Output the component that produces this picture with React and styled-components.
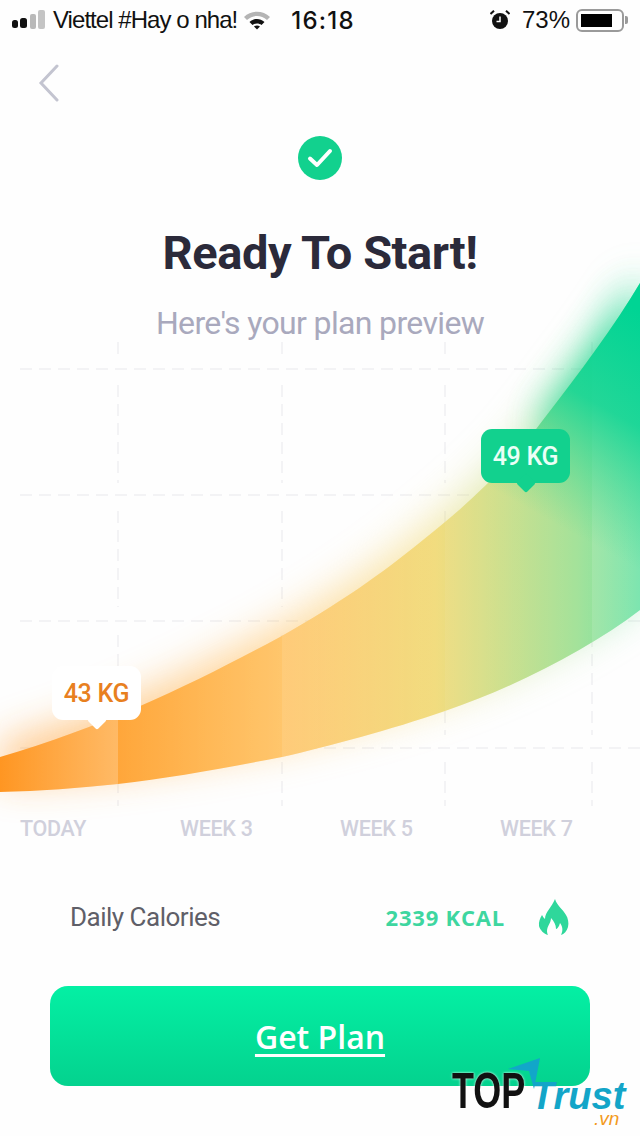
import styled, { createGlobalStyle } from "styled-components"

const GlobalStyle = createGlobalStyle`
  * { box-sizing: border-box; }
  body { margin: 0; background: #fefefe; }
`

const BAND = "M0 757 C110 725 200 680 280 637 C340 603 380 575 423 540 C470 503 510 465 543 420 C580 372 615 325 640 283 L640 610 C590 648 520 685 445 711 C390 730 330 746 282 757 C220 769 170 778 118 784 C80 788 40 791 0 792 Z"

const GRID_ROWS = [369, 495, 621, 748]
const GRID_COLS = [118, 282, 445, 592]
const GRID_SPANS = [[342, 358], [385, 483], [511, 607], [635, 735], [762, 806]]
const COL_SHADES = [
  { x: 0, w: 118, from: 0, to: 0.22 },
  { x: 118, w: 164, from: 0, to: 0.12 },
  { x: 282, w: 163, from: 0.2, to: 0.1 },
  { x: 445, w: 147, from: 0.14, to: 0.12 },
  { x: 592, w: 48, from: 0.22, to: 0.2 },
]
const WEEKS = ["TODAY", "WEEK 3", "WEEK 5", "WEEK 7"]

function SignalIcon() {
  return (
    <svg width="35" height="22" viewBox="0 0 35 22">
      <rect x="0" y="11" width="6" height="8" rx="2.5" fill="#111" />
      <rect x="8" y="9" width="7" height="10" rx="2.5" fill="#111" />
      <rect x="18" y="5" width="6" height="15" rx="2" fill="#b9b9b9" />
      <rect x="26" y="1" width="7" height="19" rx="2" fill="#c4c4c4" />
    </svg>
  )
}

function WifiIcon() {
  return (
    <svg width="28" height="20" viewBox="0 0 28 20">
      <path d="M1 7 C8 0 20 0 27 7 L24 10 C18 4.500 10 4.500 4 10 Z" fill="#b4b4b4" />
      <path d="M6.500 12 C11 8 17 8 21.500 12 L18.500 15 C16 13 12 13 9.500 15 Z" fill="#111" />
      <path d="M11 16.500 C13 15 15 15 17 16.500 L14 19.500 Z" fill="#111" />
    </svg>
  )
}

function AlarmIcon() {
  return (
    <svg width="20" height="20" viewBox="0 0 20 20">
      <circle cx="10" cy="11" r="8" fill="#111" />
      <path d="M10 6.500 V11.500 H6.500" stroke="#fff" strokeWidth="1.500" fill="none" />
      <path d="M0.500 4 L4 0.800 M19.500 4 L16 0.800" stroke="#111" strokeWidth="2" />
    </svg>
  )
}

function FlameIcon() {
  return (
    <svg width="32" height="38" viewBox="0 0 32 38">
      <path
        d="M17 1 C19 8 25 11 28 17 C30 20 31 25 30 29 C29 33 26 36 23 37 C25 33 25 29 22 25 C21 29 19 31 18 31 C18 27 16 23 13 20 C13 25 9 28 9 33 C9 34.500 9.500 36 10 37 C6 36 2 32 1 28 C0.500 24 2 20 4 17 C5 19 6 20 7 21 C7 14 14 9 17 1 Z"
        fill="#2fd79b"
      />
    </svg>
  )
}

function Chart() {
  return (
    <ChartSvg viewBox="0 230 640 590">
      <defs>
        <linearGradient id="band" gradientUnits="userSpaceOnUse" x1="0" y1="0" x2="640" y2="0">
          <stop offset="0" stopColor="#ff9622" />
          <stop offset="0.18" stopColor="#ffa63a" />
          <stop offset="0.44" stopColor="#ffbe58" />
          <stop offset="0.68" stopColor="#f0d870" />
          <stop offset="0.9" stopColor="#98de8c" />
          <stop offset="1" stopColor="#5cdf9c" />
        </linearGradient>
        <linearGradient id="greenTop" gradientUnits="userSpaceOnUse" x1="640" y1="310" x2="530" y2="510">
          <stop offset="0" stopColor="#00d494" />
          <stop offset="0.45" stopColor="#0dd494" stopOpacity="0.85" />
          <stop offset="1" stopColor="#3fd690" stopOpacity="0" />
        </linearGradient>
        {COL_SHADES.map((c, i) => (
          <linearGradient key={c.x} id={`shade${i}`}>
            <stop offset="0" stopColor="#fff" stopOpacity={c.from} />
            <stop offset="1" stopColor="#fff" stopOpacity={c.to} />
          </linearGradient>
        ))}
        <filter id="glow" filterUnits="userSpaceOnUse" x="-100" y="100" width="840" height="900">
          <feGaussianBlur stdDeviation="20" />
        </filter>
        <clipPath id="bandClip">
          <path d={BAND} />
        </clipPath>
      </defs>

      {GRID_ROWS.map((y) => (
        <GridLine key={y} x1="20" y1={y} x2="640" y2={y} />
      ))}
      {GRID_COLS.map((x) =>
        GRID_SPANS.map(([a, b]) => <GridLine key={`${x}-${a}`} x1={x} y1={a} x2={x} y2={b} />)
      )}

      <path d={BAND} fill="url(#band)" filter="url(#glow)" opacity="0.55" transform="translate(0 -12)" />
      <path d="M640 283 C615 325 580 372 543 420 L640 560 Z" fill="#00d494" filter="url(#glow)" opacity="0.8" />

      <path d={BAND} fill="url(#band)" />
      <g clipPath="url(#bandClip)">
        {COL_SHADES.map((c, i) => (
          <rect key={c.x} x={c.x} y="270" width={c.w} height="530" fill={`url(#shade${i})`} />
        ))}
        <rect x="440" y="270" width="200" height="350" fill="url(#greenTop)" />
      </g>
    </ChartSvg>
  )
}

export default function App() {
  return (
    <>
      <GlobalStyle />
      <Page>
        <StatusBar>
          <StatusGroup>
            <SignalIcon />
            <Carrier>Viettel #Hay o nha!</Carrier>
            <WifiIcon />
          </StatusGroup>
          <Clock>16:18</Clock>
          <RightGroup>
            <AlarmIcon />
            <Percent>73%</Percent>
            <Battery>
              <BatteryFill />
            </Battery>
            <BatteryTip />
          </RightGroup>
        </StatusBar>

        <Nav>
          <svg width="22" height="38" viewBox="0 0 22 38">
            <path d="M19 2 L3 19 L19 36" fill="none" stroke="#c3c4d0" strokeWidth="3" strokeLinecap="round" />
          </svg>
        </Nav>

        <Header>
          <CheckBadge>
            <svg width="26" height="22" viewBox="0 0 26 22">
              <path d="M3 11.500 L10 18 L23 4" fill="none" stroke="#fff" strokeWidth="4" strokeLinecap="round" strokeLinejoin="round" />
            </svg>
          </CheckBadge>
          <Title>Ready To Start!</Title>
          <Subtitle>Here's your plan preview</Subtitle>
        </Header>

        <ChartSection>
          <Chart />
          <WeightTag $left={52} $top={436} $bg="#ffffff" $color="#e8801f">
            43 KG
          </WeightTag>
          <WeightTag $left={481} $top={199} $bg="#12d18e" $color="#eafff6">
            49 KG
          </WeightTag>
        </ChartSection>

        <AxisRow>
          {WEEKS.map((w) => (
            <AxisLabel key={w}>{w}</AxisLabel>
          ))}
        </AxisRow>

        <CaloriesRow>
          <CaloriesLabel>Daily Calories</CaloriesLabel>
          <CaloriesValue>
            <KcalText>2339 KCAL</KcalText>
            <FlameIcon />
          </CaloriesValue>
        </CaloriesRow>

        <GetPlanButton>Get Plan</GetPlanButton>

        <Watermark>
          <svg width="40" height="40" viewBox="0 0 40 40">
            <path d="M2 12 L34 1 L28 32 L23 14 Z" fill="#12a6c9" />
          </svg>
          <WatermarkTop>TOP</WatermarkTop>
          <WatermarkTrust>Trust</WatermarkTrust>
          <WatermarkVn>.vn</WatermarkVn>
        </Watermark>
      </Page>
    </>
  )
}

const Page = styled.div`
  position: relative;
  width: 640px;
  height: 1136px;
  overflow: hidden;
  background: #fefefe;
  display: flex;
  flex-direction: column;
`
const StatusBar = styled.div`
  height: 40px;
  padding: 0 12px;
  display: flex;
  align-items: center;
  font-family: "Liberation Sans", Arial, sans-serif;
  color: #111;
`
const StatusGroup = styled.div`
  display: flex;
  align-items: center;
  gap: 6px;
`
const RightGroup = styled(StatusGroup)`
  margin-left: auto;
`
const Carrier = styled.span`
  font-size: 24px;
  letter-spacing: -0.95px;
`
const Clock = styled.span`
  font-size: 24px;
  font-weight: 500;
  margin-left: 20px;
  letter-spacing: 1.2px;
  font-family: Inter, sans-serif;
`
const Percent = styled.span`
  font-size: 24px;
  margin-left: 6px;
`
const Battery = styled.div`
  width: 48px;
  height: 23px;
  padding: 3px;
  border: 2px solid #9a9a9a;
  border-radius: 6px;
`
const BatteryFill = styled.div`
  width: 31px;
  height: 100%;
  background: #000;
`
const BatteryTip = styled.div`
  width: 3px;
  height: 8px;
  margin-left: -5px;
  background: #9a9a9a;
  border-radius: 0 2px 2px 0;
`
const Nav = styled.div`
  height: 96px;
  padding: 24px 0 0 38px;
`
const Header = styled.div`
  position: relative;
  z-index: 1;
  display: flex;
  flex-direction: column;
  align-items: center;
`
const CheckBadge = styled.div`
  width: 44px;
  height: 44px;
  border-radius: 50%;
  background: #12d18e;
  display: flex;
  align-items: center;
  justify-content: center;
`
const Title = styled.h1`
  margin: 40px 0 0;
  font-family: Roboto, sans-serif;
  font-size: 47px;
  line-height: 66px;
  font-weight: 700;
  letter-spacing: -0.45px;
  color: #2b2a3a;
`
const Subtitle = styled.p`
  margin: 17px 0 0;
  font-family: Roboto, sans-serif;
  font-size: 32px;
  line-height: 40px;
  font-weight: 400;
  letter-spacing: -0.65px;
  color: #a9a9bd;
`
const ChartSection = styled.div`
  position: relative;
  height: 580px;
  margin-top: -113px;
`
const ChartSvg = styled.svg`
  display: block;
  width: 640px;
  height: 590px;
  overflow: visible;
`
const GridLine = styled.line`
  stroke: #f3f3f5;
  stroke-width: 2;
  stroke-dasharray: 12 7;
`
const WeightTag = styled.div`
  position: absolute;
  left: ${(p) => p.$left}px;
  top: ${(p) => p.$top}px;
  width: 89px;
  height: 54px;
  border-radius: 11px;
  background: ${(p) => p.$bg};
  color: ${(p) => p.$color};
  font-family: Roboto, sans-serif;
  font-size: 25px;
  font-weight: 500;
  letter-spacing: -0.3px;
  display: flex;
  align-items: center;
  justify-content: center;

  &::after {
    content: "";
    position: absolute;
    left: 50%;
    bottom: -7px;
    width: 14px;
    height: 14px;
    margin-left: -7px;
    background: ${(p) => p.$bg};
    transform: rotate(45deg);
    border-radius: 2px;
  }
`
const AxisRow = styled.div`
  height: 36px;
  padding: 5px 0 0 20px;
  display: grid;
  grid-template-columns: repeat(4, 160px);
`
const AxisLabel = styled.span`
  font-family: Roboto, sans-serif;
  font-size: 21.5px;
  line-height: 28px;
  font-weight: 500;
  letter-spacing: -0.3px;
  color: #d0d0dc;
`
const CaloriesRow = styled.div`
  margin-top: 52px;
  padding: 0 70px;
  height: 38px;
  display: flex;
  align-items: center;
  justify-content: space-between;
`
const CaloriesLabel = styled.span`
  font-family: Roboto, sans-serif;
  font-size: 26px;
  letter-spacing: -0.5px;
  color: #5f5f68;
`
const CaloriesValue = styled.div`
  display: flex;
  align-items: center;
  gap: 33px;
`
const KcalText = styled.span`
  font-family: "Open Sans", sans-serif;
  font-size: 22px;
  font-weight: 700;
  letter-spacing: 0.8px;
  color: #3ed6a0;
`
const GetPlanButton = styled.button`
  display: block;
  width: 540px;
  height: 100px;
  margin: 50px 0 0 50px;
  border: none;
  border-radius: 18px;
  background: linear-gradient(180deg, #04f0a4 0%, #04d28e 100%);
  color: #fff;
  font-family: "Open Sans", sans-serif;
  font-size: 32px;
  font-weight: 600;
  text-decoration: underline;
  text-underline-offset: 5px;
`
const Watermark = styled.div`
  position: absolute;
  left: 452px;
  top: 1056px;
  width: 180px;
  height: 70px;

  svg {
    position: absolute;
    left: 54px;
    top: 1px;
  }
`
const WatermarkTop = styled.span`
  position: absolute;
  left: 0;
  top: 7px;
  font-family: "Liberation Sans", sans-serif;
  font-size: 50px;
  line-height: 56px;
  font-weight: 700;
  color: #111;
  transform: scaleX(0.72);
  transform-origin: left center;
  text-shadow: 0 0 3px #fff;
`
const WatermarkTrust = styled.span`
  position: absolute;
  left: 79px;
  top: 25px;
  font-family: "Liberation Sans", sans-serif;
  font-size: 38px;
  line-height: 30px;
  font-weight: 700;
  font-style: italic;
  color: #13a5c8;
`
const WatermarkVn = styled.span`
  position: absolute;
  left: 142px;
  top: 56px;
  font-family: "Liberation Sans", sans-serif;
  font-size: 19px;
  line-height: 14px;
  font-style: italic;
  color: #f39a1d;
`
